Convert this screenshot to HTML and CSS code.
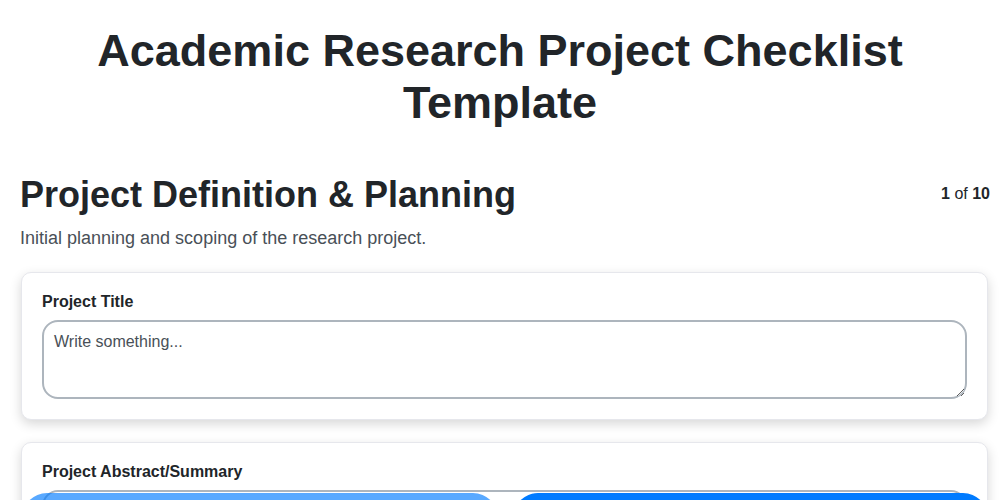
FILE: index.html
```html
<!DOCTYPE html>
<html>
<head>
  <meta name="viewport" content="width=device-width, initial-scale=1.0">
  <link rel="stylesheet" href="styles.css">
</head>
<body>
  <!-- TITULO -->
  <h1 class="titulo">Academic Research Project Checklist Template</h1>

  <!-- SECCION -->
  <div class="seccion">
    <div class="seccion-cabecera">
      <h2>Project Definition &amp; Planning</h2>
      <div class="contador"><b>1</b> of <b>10</b></div>
    </div>
    <p class="descripcion">Initial planning and scoping of the research project.</p>

    <div class="tarjeta">
      <label class="etiqueta" for="campo1">Project Title</label>
      <textarea id="campo1" placeholder="Write something..."></textarea>
    </div>

    <div class="tarjeta">
      <label class="etiqueta" for="campo2">Project Abstract/Summary</label>
      <textarea id="campo2" placeholder="Write something..."></textarea>
    </div>
  </div>

  <!-- NAVEGACION -->
  <div class="navegacion">
    <button class="btn-anterior" disabled>Previous</button>
    <button class="btn-siguiente">Next</button>
  </div>
</body>
</html>
```

FILE: styles.css
```css
/* ESTILOS GENERALES */
body {
  margin: 0;
  background: #ffffff;
  color: #212529;
  font-family: "Liberation Sans", Arial, sans-serif;
}

.titulo {
  margin: 25px 0 0;
  text-align: center;
  font-size: 45px;
  line-height: 52px;
  font-weight: bold;
}

/* SECCION */
.seccion {
  padding: 0 12px 120px 21px;
}

.seccion-cabecera {
  display: flex;
  justify-content: space-between;
  align-items: center;
  margin-top: 44px;
}

.seccion-cabecera h2 {
  margin: 0 0 0 -1px;
  font-size: 36px;
  line-height: 44px;
}

.contador {
  font-size: 16px;
  margin-right: -2px;
  margin-top: -3px;
}

.descripcion {
  margin: 9px 0 21px -1px;
  font-size: 18px;
  line-height: 25px;
  color: #495057;
}

/* TARJETAS */
.tarjeta {
  display: flex;
  flex-direction: column;
  padding: 20px;
  margin-bottom: 22px;
  border: 1px solid #e6e7ec;
  border-radius: 10px;
  background: #ffffff;
  box-shadow: 0 4px 12px rgba(0, 0, 0, 0.16);
}

.etiqueta {
  font-size: 16px;
  font-weight: bold;
  line-height: 18px;
  margin-bottom: 9px;
}

textarea {
  box-sizing: border-box;
  height: 79px;
  padding: 10px;
  border: 2px solid #adb5bd;
  border-radius: 16px;
  font-family: "Liberation Sans", Arial, sans-serif;
  font-size: 16px;
  line-height: 19px;
  color: #212529;
  resize: vertical;
}

textarea::placeholder {
  color: #495057;
}

/* NAVEGACION */
.navegacion {
  position: fixed;
  left: 22px;
  right: 12px;
  bottom: -43px;
  display: flex;
  gap: 15px;
}

.navegacion button {
  flex: 1;
  height: 50px;
  padding-top: 16px;
  border: none;
  border-radius: 25px;
  font-family: "Liberation Sans", Arial, sans-serif;
  font-size: 18px;
  color: white;
  cursor: pointer;
}

.btn-anterior {
  background: #007bff;
  opacity: 0.65;
  cursor: not-allowed;
}

.btn-siguiente {
  background: #007bff;
}
```
